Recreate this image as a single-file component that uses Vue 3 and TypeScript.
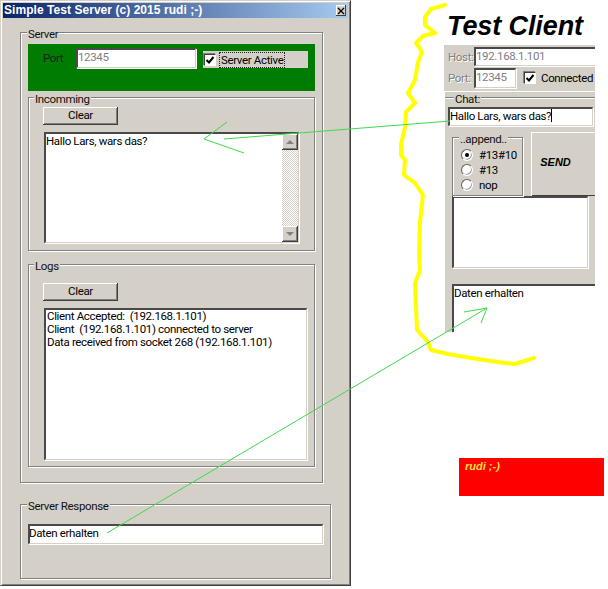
<script setup lang="ts">
const logLines: string[] = [
  'Client Accepted:  (192.168.1.101)',
  'Client  (192.168.1.101) connected to server',
  'Data received from socket 268 (192.168.1.101)',
]
const radios = [
  { label: '#13#10', on: true },
  { label: '#13', on: false },
  { label: 'nop', on: false },
]
const yellow =
  '445,5 431,9 425,17 425,25 435,33 423,36 416,43 422,52 418,62 415,80 408,93 415,103 406,112 405,127 401,145 401,155 405,160 404,175 415,183 423,195 420,222 419,255 420,270 415,283 416,307 417,330 428,342 431,350 448,354 471,358 505,363 515,364 534,358'
</script>

<template>
  <div class="desktop">
    <section class="win">
      <header class="titlebar">
        <span>Simple Test Server (c) 2015 rudi ;-)</span>
        <span class="close">
          <svg width="8" height="8" viewBox="0 0 8 8"><path d="M1 1L7 7M7 1L1 7" stroke="#000" stroke-width="1.3" fill="none" /></svg>
        </span>
      </header>
      <div class="win-body">
        <div class="group g-server">
          <span class="legend l-server">Server</span>
          <div class="green">
            <label class="port-label">Port</label>
            <div class="field port-input dim">12345</div>
            <div class="active">
              <span class="check">
                <svg width="10" height="10" viewBox="0 0 10 10"><path d="M1.5 5L4 7.5L8.5 2" stroke="#000" stroke-width="2" fill="none" /></svg>
              </span>
              <span class="active-text">Server Active</span>
            </div>
          </div>
          <div class="group g-in">
            <span class="legend l-in">Incomming</span>
            <button class="btn">Clear</button>
            <div class="field memo-in">
              <span class="memo-text">Hallo Lars, wars das?</span>
              <div class="scroll">
                <span class="sbtn"><i class="tri up"></i></span>
                <span class="track"></span>
                <span class="sbtn"><i class="tri down"></i></span>
              </div>
            </div>
          </div>
          <div class="group g-logs">
            <span class="legend l-in">Logs</span>
            <button class="btn">Clear</button>
            <div class="field memo-logs">
              <div v-for="l in logLines" :key="l" class="log-line">{{ l }}</div>
            </div>
          </div>
        </div>
        <div class="group g-resp">
          <span class="legend l-server">Server Response</span>
          <div class="field resp-input">Daten erhalten</div>
        </div>
      </div>
    </section>

    <section class="client">
      <h1 class="c-title">Test Client</h1>
      <div class="c-top">
        <div class="c-row">
          <label class="c-label">Host:</label>
          <div class="field c-host dim">192.168.1.101</div>
        </div>
        <div class="c-row r2">
          <label class="c-label">Port:</label>
          <div class="field c-port dim">12345</div>
          <span class="check c-check">
            <svg width="10" height="10" viewBox="0 0 10 10"><path d="M1.5 5L4 7.5L8.5 2" stroke="#000" stroke-width="2" fill="none" /></svg>
          </span>
          <span class="c-conn">Connected</span>
        </div>
      </div>
      <div class="c-bottom">
        <div class="group g-chat">
          <span class="legend l-chat">Chat:</span>
          <div class="field c-chat">Hallo Lars, wars das?<i class="caret"></i></div>
          <div class="c-mid">
            <div class="group g-append">
              <span class="legend l-append">..append..</span>
              <div v-for="r in radios" :key="r.label" class="radio-row">
                <span class="radio"><i v-if="r.on" class="dot"></i></span>
                <span>{{ r.label }}</span>
              </div>
            </div>
            <button class="send">SEND</button>
          </div>
          <div class="field c-memo"></div>
        </div>
        <div class="field c-recv">Daten erhalten</div>
      </div>
    </section>

    <div class="red"><span>rudi ;-)</span></div>

    <svg class="overlay" width="608" height="589" viewBox="0 0 608 589">
      <polyline :points="yellow" fill="none" stroke="#ffff00" stroke-width="4" stroke-linejoin="round" stroke-linecap="round" />
      <path d="M450 121L224 139M227 122L204 139L244 153" fill="none" stroke="#3ed94e" stroke-width="1" />
      <path d="M107 533L487 308M464 312L487 308L481 323" fill="none" stroke="#3ed94e" stroke-width="1" />
    </svg>
  </div>
</template>

<style>
html, body { background: #fff; }
</style>

<style scoped>
.desktop {
  position: relative;
  width: 608px;
  height: 589px;
  overflow: hidden;
  background: #fff;
  font: 11.5px/14px Roboto, "Liberation Sans", Arial, sans-serif;
  letter-spacing: -0.35px;
  color: #000;
}
.win {
  position: absolute;
  left: 0;
  top: 0;
  width: 351px;
  height: 586px;
  box-sizing: border-box;
  padding: 2px;
  background: #d4d0c8;
  border: 1px solid;
  border-color: #d4d0c8 #404040 #404040 #d4d0c8;
  box-shadow: inset 1px 1px #fff, inset -1px -1px #808080;
}
.titlebar {
  height: 15px;
  display: flex;
  align-items: center;
  justify-content: space-between;
  padding: 0 2px 0 1px;
  background: linear-gradient(90deg, #0a246a, #a6caf0);
  color: #fff;
  font: bold 12px/15px "Liberation Sans", Arial, sans-serif;
  letter-spacing: 0.05px;
  white-space: nowrap;
}
.close {
  width: 10px;
  height: 11px;
  display: flex;
  align-items: center;
  justify-content: center;
  background: #d4d0c8;
  box-shadow: inset -1px -1px #404040, inset 1px 1px #fff;
}
.win-body {
  padding: 14px 0 0 17px;
}
.group {
  position: relative;
  box-sizing: border-box;
  border: 1px solid #808080;
  box-shadow: inset 1px 1px #fff, 1px 1px #fff;
}
.legend {
  position: absolute;
  top: -6px;
  background: #d4d0c8;
  padding: 0 1px;
  color: #111;
  white-space: nowrap;
}
.l-server { left: 6px; }
.l-in { left: 5px; }
.g-server {
  width: 303px;
  height: 451px;
  padding: 11px 7px 0;
}
.green {
  height: 47px;
  width: 287px;
  box-sizing: border-box;
  background: #007c00;
  display: flex;
  align-items: flex-start;
  padding: 4px 0 0 15px;
}
.port-label {
  width: 33px;
  line-height: 20px;
  color: #1c1c1c;
}
.field {
  box-sizing: border-box;
  background: #fff;
  border-style: solid;
  border-width: 2px 1px 1px 2px;
  border-color: #4a4a4a #d4d0c8 #d4d0c8 #4a4a4a;
  box-shadow: 1px 1px #fff;
  white-space: nowrap;
  overflow: hidden;
}
.dim { color: #808080; }
.port-input {
  width: 120px;
  height: 20px;
  line-height: 15px;
}
.active {
  margin: 3px 0 0 7px;
  width: 105px;
  height: 17px;
  display: flex;
  align-items: center;
  background: #d4d0c8;
  padding-left: 1px;
  box-sizing: border-box;
}
.check {
  width: 12px;
  height: 12px;
  box-sizing: border-box;
  flex: none;
  display: flex;
  align-items: center;
  justify-content: center;
  background: #fff;
  border-style: solid;
  border-width: 1px;
  border-color: #404040 #fff #fff #404040;
  box-shadow: -1px -1px #808080;
}
.active-text {
  margin-left: 4px;
  padding: 0 1px;
  outline: 1px dotted #222;
  outline-offset: 0;
  line-height: 14px;
}
.g-in {
  width: 287px;
  height: 154px;
  margin-top: 6px;
  padding: 9px 0 0 14px;
}
.btn {
  display: block;
  width: 75px;
  height: 18px;
  padding: 0 0 2px;
  background: #d4d0c8;
  border: none;
  box-shadow: inset -1px -1px #404040, inset 1px 1px #fff, inset -2px -2px #808080;
  font: inherit;
  letter-spacing: inherit;
  color: #000;
}
.memo-in {
  width: 255px;
  height: 111px;
  margin: 7px 0 0 1px;
  display: flex;
  justify-content: space-between;
}
.memo-text { padding: 0; }
.scroll {
  width: 16px;
  display: flex;
  flex-direction: column;
  margin: 0 0 0 auto;
}
.sbtn {
  height: 16px;
  flex: none;
  display: flex;
  align-items: center;
  justify-content: center;
  background: #d4d0c8;
  box-shadow: inset -1px -1px #404040, inset 1px 1px #fff, inset -2px -2px #808080;
}
.track {
  flex: 1;
  background: repeating-conic-gradient(#fff 0 25%, #d4d0c8 0 50%) 0 0 / 2px 2px;
}
.tri {
  width: 0;
  height: 0;
  border-left: 4px solid transparent;
  border-right: 4px solid transparent;
}
.tri.up { border-bottom: 4px solid #808080; }
.tri.down { border-top: 4px solid #808080; }
.g-logs {
  width: 287px;
  height: 203px;
  margin-top: 13px;
  padding: 18px 0 0 14px;
}
.memo-logs {
  width: 263px;
  height: 152px;
  margin: 7px 0 0 1px;
  padding: 0 0 0 1px;
  line-height: 13px;
}
.log-line {
  height: 13px;
  white-space: pre;
}
.g-resp {
  width: 311px;
  height: 75px;
  margin-top: 21px;
  padding: 19px 0 0 7px;
}
.resp-input {
  width: 295px;
  height: 20px;
  text-indent: -1px;
  line-height: 14px;
}

.client {
  position: absolute;
  left: 444px;
  top: 0;
  width: 151px;
  height: 332px;
  overflow: hidden;
}
.c-title {
  margin: 0;
  height: 45px;
  box-sizing: border-box;
  padding: 11px 0 0 3px;
  background: #fff;
  font: italic bold 27px/30px "Liberation Sans", Arial, sans-serif;
  letter-spacing: -0.1px;
  white-space: nowrap;
}
.c-top {
  height: 46px;
  box-sizing: border-box;
  padding: 2px 0 0 4px;
  background: #d4d0c8;
}
.c-row {
  display: flex;
  align-items: center;
  height: 19px;
}
.r2 {
  height: 20px;
  margin-top: 2px;
}
.c-label {
  width: 26px;
  flex: none;
  color: #808080;
  text-shadow: 1px 1px #fff;
}
.c-host {
  width: 121px;
  height: 19px;
  flex: none;
  line-height: 15px;
  border-right: 0;
}
.c-port {
  width: 42px;
  height: 20px;
  flex: none;
  line-height: 15px;
}
.c-check { margin-left: 8px; }
.c-conn {
  margin-left: 5px;
  flex: none;
  white-space: nowrap;
}
.c-bottom {
  height: 241px;
  background: #d4d0c8;
  box-sizing: border-box;
  padding-top: 5px;
  border-top: 1px solid #fff;
  border-left: 1px solid #fff;
}
.g-chat {
  width: 152px;
  height: 180px;
  box-sizing: border-box;
  border-right: 0;
  border-bottom: 0;
  border-left: 0;
  padding: 9px 0 0 3px;
  box-shadow: inset 0 1px #fff;
}
.l-chat { left: 9px; }
.c-chat {
  width: 145px;
  height: 19px;
  line-height: 15px;
}
.caret {
  display: inline-block;
  width: 1px;
  height: 13px;
  background: #000;
  vertical-align: -2px;
}
.c-mid {
  display: flex;
  margin-top: 6px;
  align-items: flex-end;
}
.g-append {
  width: 71px;
  height: 59px;
  margin-left: 4px;
  padding: 9px 0 0 8px;
}
.l-append { left: 6px; }
.radio-row {
  display: flex;
  align-items: center;
  height: 15px;
}
.radio {
  width: 12px;
  height: 12px;
  box-sizing: border-box;
  border-radius: 50%;
  background: #fff;
  margin-right: 6px;
  display: flex;
  align-items: center;
  justify-content: center;
  border: 1px solid;
  border-color: #606060 #fff #fff #606060;
  box-shadow: -1px -1px 0 #a0a0a0 inset;
}
.dot {
  width: 4px;
  height: 4px;
  border-radius: 50%;
  background: #000;
}
.send {
  width: 66px;
  height: 64px;
  margin-left: 8px;
  padding: 0 17px 4px 0;
  border: none;
  background: #d4d0c8;
  box-shadow: inset 1px 1px #fff, inset 0 -1px #404040;
  font: italic bold 11px/14px "Liberation Sans", Arial, sans-serif;
  letter-spacing: 0;
  color: #000;
  text-align: center;
}
.c-memo {
  width: 136px;
  height: 72px;
  margin-left: 4px;
}
.c-recv {
  width: 144px;
  height: 60px;
  margin: 7px 0 0 7px;
  padding: 0;
  border-right: 0;
  border-bottom: 0;
  box-shadow: none;
}
.red {
  position: absolute;
  left: 459px;
  top: 458px;
  width: 145px;
  height: 38px;
  box-sizing: border-box;
  padding: 1px 0 0 6px;
  background: #ff0000;
  color: #ffdf3a;
  font: italic bold 11px/14px "Liberation Sans", Arial, sans-serif;
  letter-spacing: 0;
}
.overlay {
  position: absolute;
  left: 0;
  top: 0;
  pointer-events: none;
}
</style>
